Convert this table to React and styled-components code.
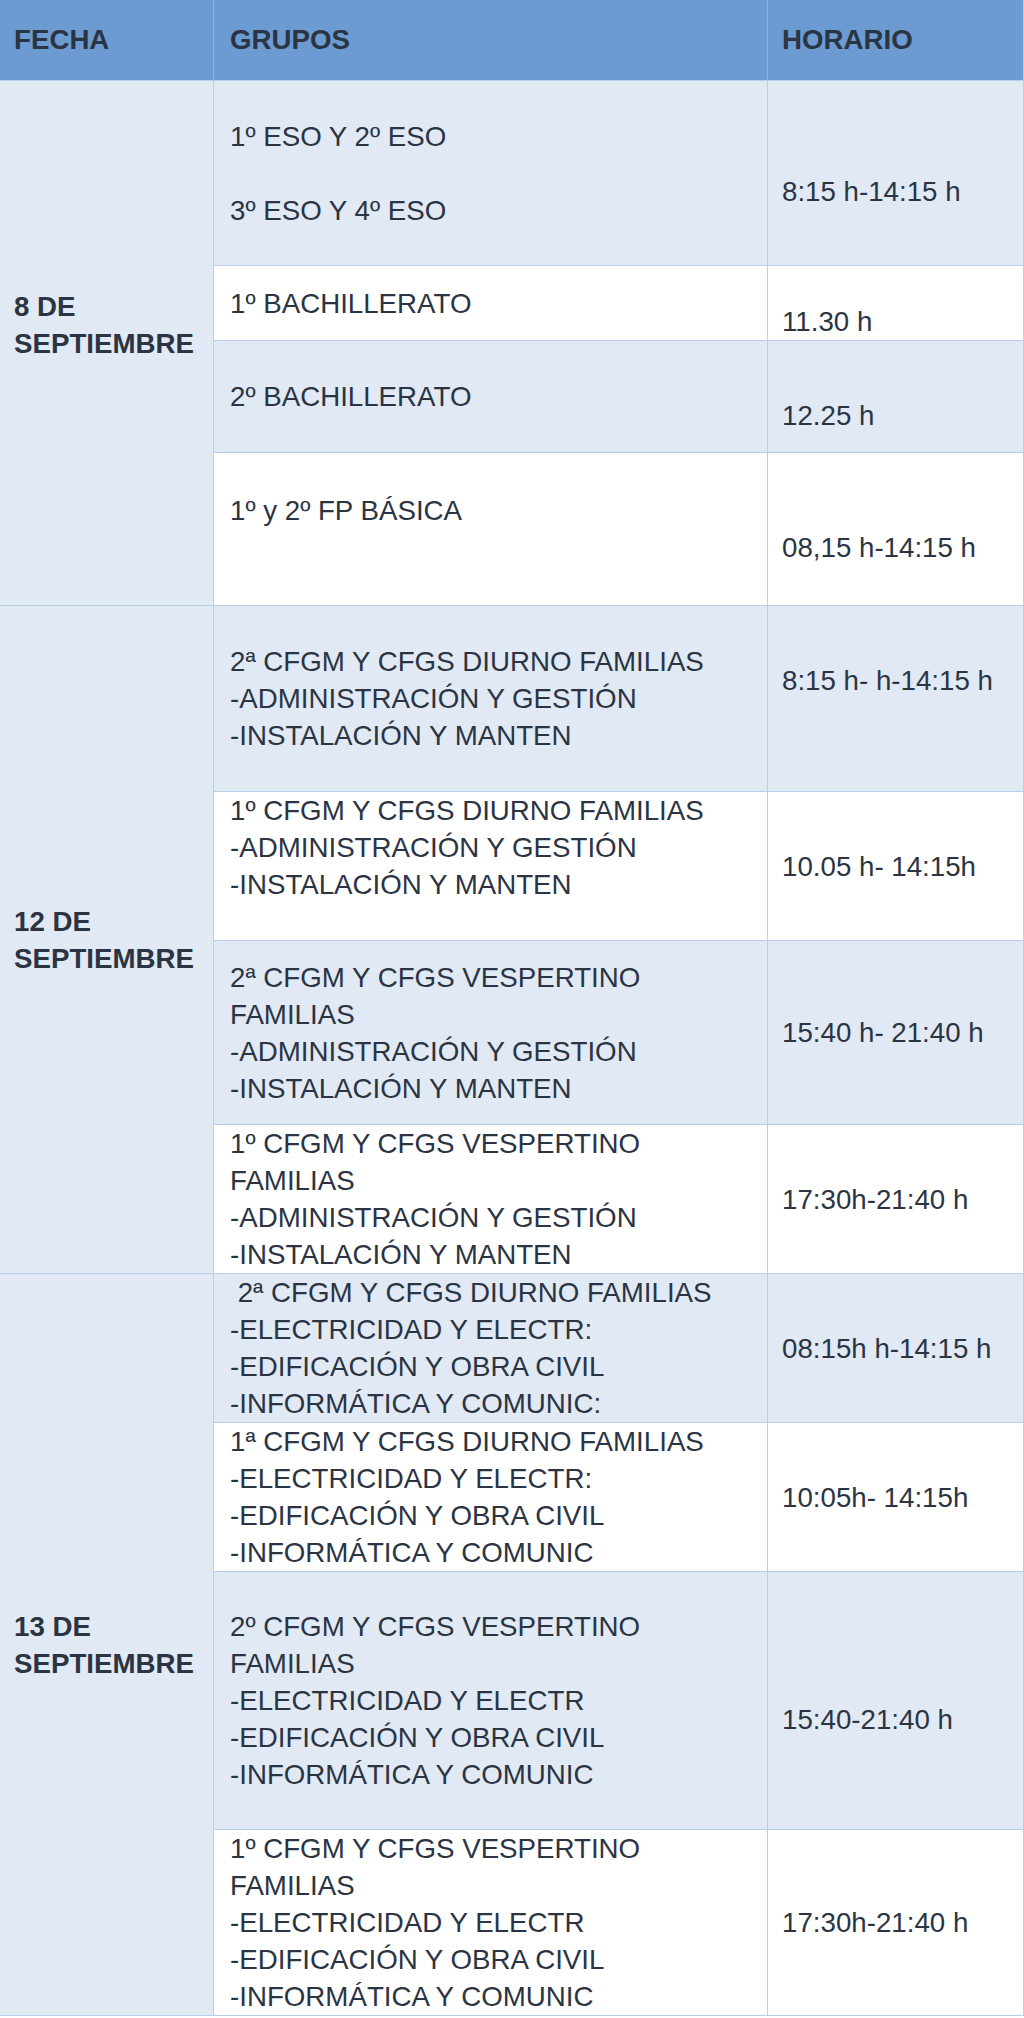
import React from "react";
import styled, { createGlobalStyle } from "styled-components";

const GlobalStyle = createGlobalStyle`
  html, body {
    margin: 0;
    padding: 0;
    background: #ffffff;
  }
  body {
    font-family: "Liberation Sans", Arial, sans-serif;
  }
`;

const LINE = 37;

const Table = styled.div`
  display: grid;
  width: 1024px;
  box-sizing: border-box;
  grid-template-columns: 213px 553px 255px;
  grid-template-rows: ${(p) => p.$rows};
  gap: 1px;
  padding: 0 1px 1px 0;
  background: #b9cfe9;
  color: #2b3443;
  font-size: 27.7px;
`;

const HeadCell = styled.div`
  display: flex;
  align-items: center;
  padding-left: ${(p) => p.$pad}px;
  background: #6b9bd1;
  font-weight: bold;
  box-shadow: ${(p) => (p.$first ? "none" : "-1px 0 0 #8fb3dd")};
`;

const Cell = styled.div`
  display: flex;
  flex-direction: column;
  justify-content: center;
  padding-left: ${(p) => p.$pad}px;
  background: ${(p) => (p.$shade ? "#e0e9f4" : "#ffffff")};
  font-weight: ${(p) => (p.$bold ? "bold" : "normal")};
  grid-column: ${(p) => p.$col};
  grid-row: ${(p) => (p.$span ? `span ${p.$span}` : "auto")};
  overflow: hidden;
`;

const Line = styled.div`
  height: ${LINE}px;
  line-height: ${LINE}px;
  white-space: pre;
`;

const days = [
  {
    date: ["8 DE", "SEPTIEMBRE", ""],
    rows: [
      { h: 185, groups: ["1º ESO Y 2º ESO", "", "3º ESO Y 4º ESO"], time: ["", "8:15 h-14:15 h"] },
      { h: 75, groups: ["1º BACHILLERATO"], time: ["", "11.30 h"] },
      { h: 112, groups: ["2º BACHILLERATO"], time: ["", "12.25 h"] },
      { h: 153, groups: ["1º y 2º FP BÁSICA", ""], time: ["", "08,15 h-14:15 h"] },
    ],
  },
  {
    date: ["12 DE", "SEPTIEMBRE"],
    rows: [
      {
        h: 186,
        groups: [
          "2ª CFGM Y CFGS DIURNO FAMILIAS",
          "-ADMINISTRACIÓN Y GESTIÓN",
          "-INSTALACIÓN Y MANTEN",
        ],
        time: ["8:15 h- h-14:15 h", ""],
      },
      {
        h: 149,
        groups: [
          "1º CFGM Y CFGS DIURNO FAMILIAS",
          "-ADMINISTRACIÓN Y GESTIÓN",
          "-INSTALACIÓN Y MANTEN",
          "",
        ],
        time: ["10.05 h- 14:15h"],
      },
      {
        h: 184,
        groups: [
          "2ª CFGM Y CFGS VESPERTINO",
          "FAMILIAS",
          "-ADMINISTRACIÓN Y GESTIÓN",
          "-INSTALACIÓN Y MANTEN",
        ],
        time: ["15:40 h- 21:40 h"],
      },
      {
        h: 149,
        groups: [
          "1º CFGM Y CFGS VESPERTINO",
          "FAMILIAS",
          "-ADMINISTRACIÓN Y GESTIÓN",
          "-INSTALACIÓN Y MANTEN",
        ],
        time: ["17:30h-21:40 h"],
      },
    ],
  },
  {
    date: ["13 DE", "SEPTIEMBRE"],
    rows: [
      {
        h: 149,
        groups: [
          " 2ª CFGM Y CFGS DIURNO FAMILIAS",
          "-ELECTRICIDAD Y ELECTR:",
          "-EDIFICACIÓN Y OBRA CIVIL",
          "-INFORMÁTICA Y COMUNIC:",
        ],
        time: ["08:15h h-14:15 h"],
      },
      {
        h: 149,
        groups: [
          "1ª CFGM Y CFGS DIURNO FAMILIAS",
          "-ELECTRICIDAD Y ELECTR:",
          "-EDIFICACIÓN Y OBRA CIVIL",
          "-INFORMÁTICA Y COMUNIC",
        ],
        time: ["10:05h- 14:15h"],
      },
      {
        h: 258,
        groups: [
          "2º CFGM Y CFGS VESPERTINO",
          "FAMILIAS",
          "-ELECTRICIDAD Y ELECTR",
          "-EDIFICACIÓN Y OBRA CIVIL",
          "-INFORMÁTICA Y COMUNIC",
        ],
        time: ["", "15:40-21:40 h"],
      },
      {
        h: 186,
        groups: [
          "1º CFGM Y CFGS VESPERTINO",
          "FAMILIAS",
          "-ELECTRICIDAD Y ELECTR",
          "-EDIFICACIÓN Y OBRA CIVIL",
          "-INFORMÁTICA Y COMUNIC",
        ],
        time: ["17:30h-21:40 h"],
      },
    ],
  },
];

const Lines = ({ items }) =>
  items.map((text, i) => <Line key={i}>{text}</Line>);

const App = () => {
  const heights = [81, ...days.flatMap((d) => d.rows.map((r) => r.h))];
  const rowTemplate = heights.map((h) => `${h - 1}px`).join(" ");
  let index = 0;

  return (
    <>
      <GlobalStyle />
      <Table $rows={rowTemplate}>
        <HeadCell $pad={14} $first>FECHA</HeadCell>
        <HeadCell $pad={16}>GRUPOS</HeadCell>
        <HeadCell $pad={14}>HORARIO</HeadCell>

        {days.map((day) => (
          <React.Fragment key={day.date.join(" ")}>
            <Cell $col={1} $span={day.rows.length} $pad={14} $shade $bold>
              <Lines items={day.date} />
            </Cell>
            {day.rows.map((row) => {
              const shade = index % 2 === 0;
              index += 1;
              return (
                <React.Fragment key={row.groups[0] + row.time[row.time.length - 1]}>
                  <Cell $col={2} $pad={16} $shade={shade}>
                    <Lines items={row.groups} />
                  </Cell>
                  <Cell $col={3} $pad={14} $shade={shade}>
                    <Lines items={row.time} />
                  </Cell>
                </React.Fragment>
              );
            })}
          </React.Fragment>
        ))}
      </Table>
    </>
  );
};

export default App;
